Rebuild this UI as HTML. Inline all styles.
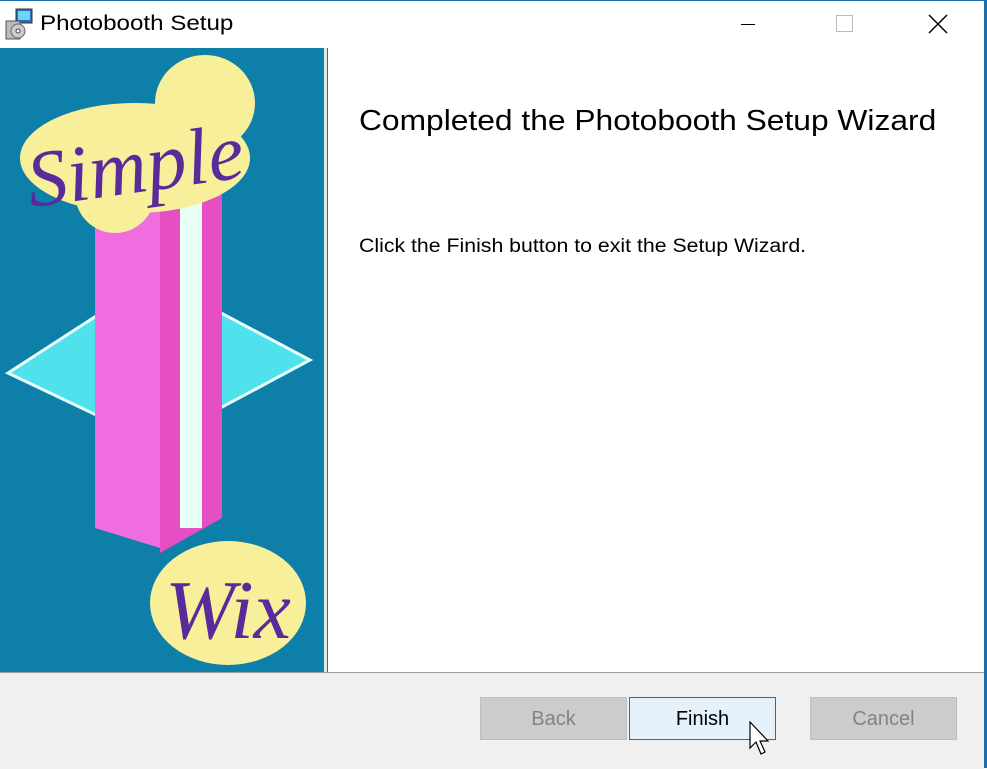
<!DOCTYPE html>
<html><head><style>
body{margin:0;width:987px;height:768px;overflow:hidden;background:#fff;font-family:"Liberation Sans",sans-serif;position:relative}
.win{position:absolute;left:0;top:0;width:987px;height:768px;border-top:1px solid #1a6fb0;border-right:3px solid #1a6fb0;box-sizing:border-box}
.t{position:absolute;left:40px;top:12px;font-size:21px;color:#000;transform:scaleX(1.15);transform-origin:0 0}
.bar{position:absolute;left:0;top:672px;width:984px;height:96px;background:#f0f0f0;border-top:1px solid #a0a0a0}
.btn{position:absolute;top:697px;height:43px;width:147px;box-sizing:border-box;font-size:20px;text-align:center;line-height:43px}
.dis{background:#cccccc;border:1px solid #bfbfbf;color:#838383}
</style></head><body>
<div class="win"></div>
<svg style="position:absolute;left:4px;top:7px" width="30" height="34" viewBox="0 0 30 34">
<rect x="12" y="2" width="16" height="14" fill="#2a6fb8" stroke="#333"/><rect x="14" y="4" width="12" height="9" fill="#6fd3f5"/>
<rect x="2" y="14" width="14" height="18" fill="#bbb" stroke="#555"/><circle cx="14" cy="24" r="7" fill="#ccc" stroke="#666"/><circle cx="14" cy="24" r="2" fill="#fff" stroke="#444"/>
</svg>
<div class="t">Photobooth Setup</div>
<div style="position:absolute;left:741px;top:24px;width:14px;height:1px;background:#000"></div>
<div style="position:absolute;left:836px;top:15px;width:17px;height:17px;border:1px solid #bbb;box-sizing:border-box"></div>
<svg style="position:absolute;left:928px;top:14px" width="20" height="20"><path d="M1 1L19 19M19 1L1 19" stroke="#000" stroke-width="1.5"/></svg>
<svg style="position:absolute;left:0;top:48px" width="328" height="624" viewBox="0 0 328 624">
<rect width="328" height="624" fill="#0e7fa8"/>
<rect x="324" width="3" height="624" fill="#dfe8e8"/>
<polygon points="155,230 310,312 155,395 8,325" fill="#4fe1ec" stroke="#e8ffff" stroke-width="3"/>
<polygon points="95,175 160,160 160,500 95,480" fill="#f06de0"/>
<polygon points="160,138 222,145 222,470 160,505" fill="#e64fc4"/>
<rect x="180" y="140" width="22" height="340" fill="#e8fff8"/>
<ellipse cx="135" cy="110" rx="115" ry="55" fill="#f7ef9a"/>
<ellipse cx="205" cy="55" rx="50" ry="48" fill="#f7ef9a"/>
<ellipse cx="115" cy="145" rx="40" ry="40" fill="#f7ef9a"/>
<ellipse cx="228" cy="555" rx="78" ry="62" fill="#f7ef9a"/>
<text x="25" y="145" font-family="Liberation Serif,serif" font-style="italic" font-size="80" fill="#5a2a9a" transform="rotate(-8 130 110)">Simple</text>
<text x="165" y="590" font-family="Liberation Serif,serif" font-style="italic" font-size="84" fill="#5a2a9a">Wix</text>
</svg>
<div style="position:absolute;left:359px;top:105px;font-size:29px;color:#000;transform:scaleX(1.095);transform-origin:0 0;white-space:nowrap">Completed the Photobooth Setup Wizard</div>
<div style="position:absolute;left:359px;top:236px;font-size:19px;color:#000;transform:scaleX(1.12);transform-origin:0 0;white-space:nowrap">Click the Finish button to exit the Setup Wizard.</div>
<div class="bar"></div>
<div class="btn dis" style="left:480px">Back</div>
<div class="btn" style="left:629px;background:#e5f1fb;border:1px solid #0078d7;color:#000">Finish</div>
<div class="btn dis" style="left:810px">Cancel</div>
<svg style="position:absolute;left:749px;top:721px" width="30" height="40"><path d="M1 1L1 27L7 21L12 33L16 31L11 20L19 20Z" fill="#fff" stroke="#000" stroke-width="1.2"/></svg>
</body></html>
